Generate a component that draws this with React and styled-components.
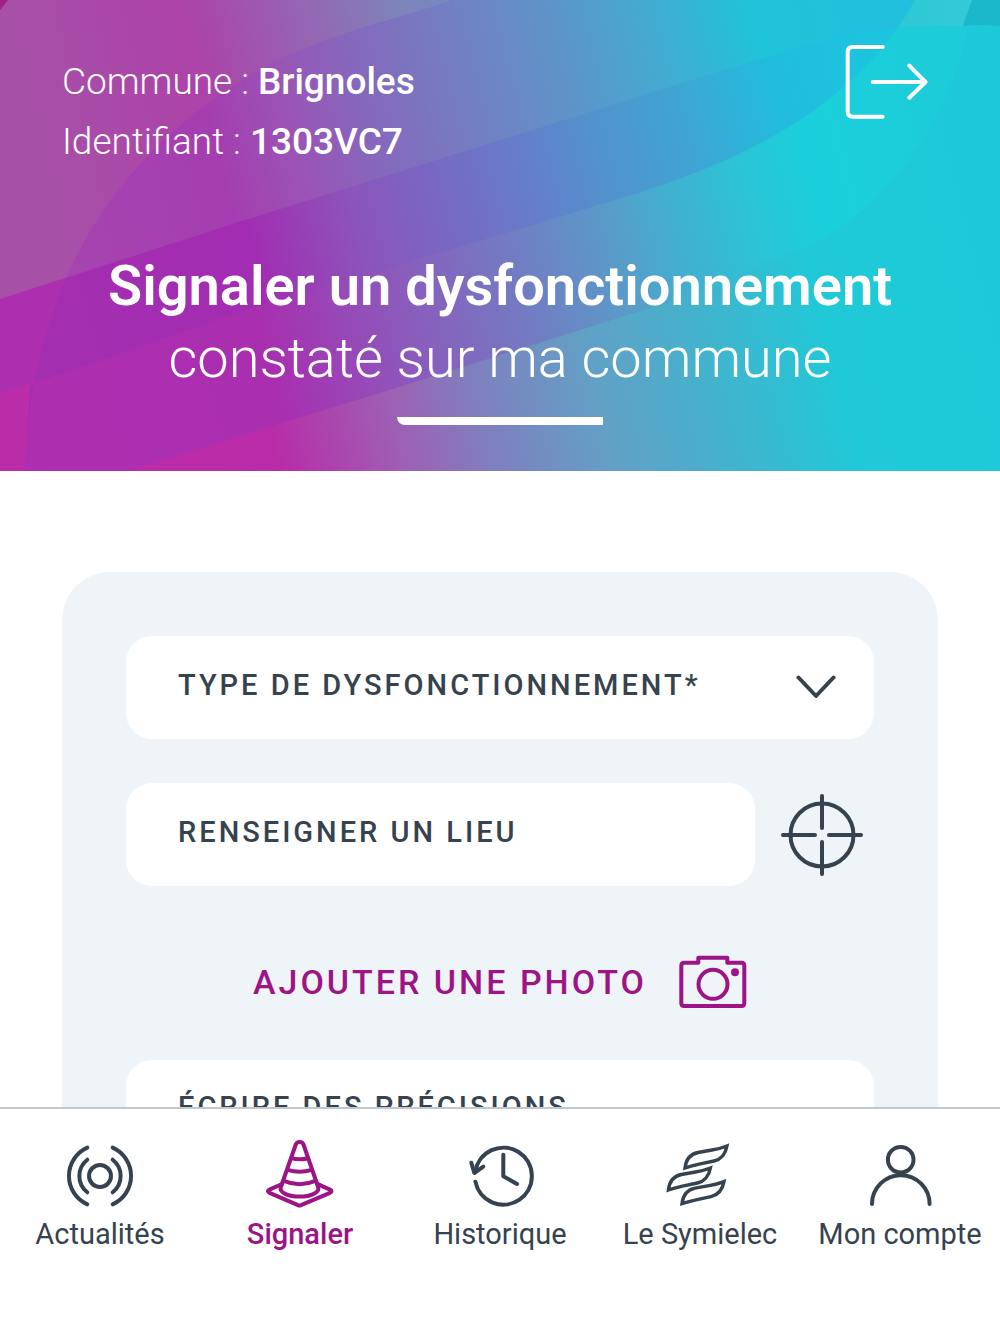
import styled, { createGlobalStyle } from 'styled-components';

const COLORS = {
  ink: '#36424e',
  accent: '#9c1485',
  panel: '#eef4f8',
  line: '#c3c8cc',
}

const GlobalStyle = createGlobalStyle`
  * {
    box-sizing: border-box;
  }

  body {
    margin: 0;
    background: white;
    color: ${COLORS.ink};
    font-family: Roboto, 'Liberation Sans', sans-serif;
  }

  button, input, select, textarea {
    font-family: inherit;
  }
`

const Screen = styled.div`
  display: flex;
  flex-direction: column;
  height: 100vh;
`

/** Everything above the tab bar scrolls */
const Content = styled.div`
  flex: 1;
  min-height: 0;
  overflow-y: auto;
  scrollbar-width: none;
`

const Hero = styled.header`
  position: relative;
  isolation: isolate;
  padding: 52px 62px 46px;
  color: white;
`

const Waves = styled.svg`
  position: absolute;
  inset: 0;
  z-index: -1;
  width: 100%;
  height: 100%;
`

const HeroTop = styled.div`
  display: flex;
  justify-content: space-between;
  align-items: flex-start;
`

const Identity = styled.p`
  margin: 0;
  font-size: 37px;
  font-weight: 300;
  line-height: 60px;

  strong {
    font-weight: 500;
  }
`

const IconButton = styled.button`
  display: flex;
  flex-shrink: 0;
  padding: 0;
  border: none;
  background: none;
  color: inherit;
  cursor: pointer;
`

const LogoutButton = styled(IconButton)`
  margin: -8px 10px 0 0;
`

const Title = styled.h1`
  margin: 78px 0 0;
  font-size: 56px;
  font-weight: 300;
  line-height: 72px;
  text-align: center;

  strong {
    display: block;
    font-weight: 600;
  }
`

const TitleRule = styled.div`
  width: 206px;
  height: 8px;
  margin: 23px auto 0;
  border-bottom-left-radius: 8px;
  background: white;
`

const Main = styled.main`
  padding: 101px 62px 62px;
`

const Form = styled.form`
  display: flex;
  flex-direction: column;
  gap: 44px;
  padding: 64px;
  border-radius: 48px;
  background: ${COLORS.panel};
`

const fieldStyles = `
  display: block;
  width: 100%;
  border: none;
  border-radius: 26px;
  background: white;
  color: ${COLORS.ink};
  font-size: 29px;
  font-weight: 500;
  letter-spacing: 3px;
  text-transform: uppercase;

  &::placeholder {
    color: inherit;
    opacity: 1;
  }
`

const SelectWrap = styled.div`
  position: relative;
`

const Select = styled.select`
  ${fieldStyles}
  appearance: none;
  height: 103px;
  padding: 0 90px 6px 52px;
`

const Chevron = styled.svg`
  position: absolute;
  top: 39px;
  right: 38px;
  pointer-events: none;
`

const PlaceRow = styled.div`
  display: flex;
  align-items: center;
  gap: 26px;
  padding-right: 11px;
`

const Input = styled.input`
  ${fieldStyles}
  flex: 1;
  min-width: 0;
  height: 103px;
  padding: 0 52px 6px;
`

const Textarea = styled.textarea`
  ${fieldStyles}
  height: 240px;
  padding: 29px 52px;
  line-height: 36px;
  resize: none;
`

const PhotoButton = styled(IconButton)`
  align-items: center;
  justify-content: center;
  gap: 32px;
  height: 68px;
  margin-top: 18px;
  color: ${COLORS.accent};
  font-size: 34px;
  font-weight: 500;
  letter-spacing: 3px;
  text-transform: uppercase;
`

const TabBar = styled.nav`
  display: grid;
  grid-template-columns: repeat(5, 1fr);
  padding: 31px 0 82px;
  border-top: 2px solid ${COLORS.line};
  background: white;
`

const Tab = styled.a`
  display: flex;
  flex-direction: column;
  align-items: center;
  gap: 4px;
  color: ${props => props.$active ? COLORS.accent : COLORS.ink};
  font-size: 29px;
  font-weight: ${props => props.$active ? 500 : 400};
  line-height: 36px;
  text-decoration: none;
  white-space: nowrap;
`

/** Shared stroke settings for all the line icons */
function LineIcon({ width = 72, height = 72, stroke = 4, join = 'round', children }) {
  return (
    <svg
      width={width}
      height={height}
      viewBox={`0 0 ${width} ${height}`}
      fill="none"
      stroke="currentColor"
      strokeWidth={stroke}
      strokeLinecap="round"
      strokeLinejoin={join}
      aria-hidden="true"
    >
      {children}
    </svg>
  )
}

const NewsIcon = () => (
  <LineIcon>
    <circle cx="36" cy="36" r="11" />
    <path d="M23.3 19.7a20.7 20.7 0 0 0 0 32.6M48.7 19.7a20.7 20.7 0 0 1 0 32.6" />
    <path d="M23.3 7.7a31 31 0 0 0 0 56.6M48.7 7.7a31 31 0 0 1 0 56.6" />
  </LineIcon>
)

const ConeIcon = () => (
  <LineIcon>
    <path d="M31.8 4.500C33 1.200 38.400 1.200 39.500 4.500L54.300 47.500C55.500 53 46 56.500 35.500 56.500S15.500 53 16.700 47.500Z" />
    <path d="M27.500 18.200Q35.500 20.500 43.700 18.200M23.500 29.800Q35.500 33.500 47.700 29.800M19.700 40.800Q35.500 47.500 51.500 40.800" />
    <path d="M17.500 44.200L5.500 49.600Q2.500 51.300 5.500 52.800L34 65.200Q35.500 65.900 37 65.200L66 52.800Q69 51.300 66 49.600L53.800 44.200" />
  </LineIcon>
)

const HistoryIcon = () => (
  <LineIcon>
    <path d="M11.400 41.700A28.500 28.500 0 1 0 11.200 31.700" />
    <path d="M7.300 22.700L10.300 33L19.300 26.700" />
    <path d="M39.300 14.700V36.200L53 44" />
  </LineIcon>
)

const LEAF = 'M21 28C22 18.500 27 14 34 12.500L48 10C54 9 58 8 63 6C61.500 14 57.500 19.300 50 21L35 24.200C30 25.300 25.500 26.400 21 28Z'

const SymielecIcon = () => (
  <LineIcon stroke={3.400} join="miter">
    <path d={LEAF} />
    <path d={LEAF} transform="translate(-16.600 22)" />
    <path d={LEAF} transform="translate(-3 35.600)" />
  </LineIcon>
)

const AccountIcon = () => (
  <LineIcon>
    <circle cx="36.700" cy="19.700" r="12.800" />
    <path d="M8 64a28.800 28.800 0 0 1 57.600 0" />
  </LineIcon>
)

const TABS = [
  { label: 'Actualités', href: '#actualites', Icon: NewsIcon },
  { label: 'Signaler', href: '#signaler', Icon: ConeIcon, active: true },
  { label: 'Historique', href: '#historique', Icon: HistoryIcon },
  { label: 'Le Symielec', href: '#symielec', Icon: SymielecIcon },
  { label: 'Mon compte', href: '#compte', Icon: AccountIcon },
]

// each surface of the hero has its own run of colours, all along the same slanted axis
const GRADIENTS = {
  base: [[0, '#bb2ca8'], [0.16, '#b92ba8'], [0.29, '#9e60b4'], [0.38, '#7f80be'], [0.5, '#62a0c6'], [0.6, '#48b0cc'], [0.75, '#1fc9d8'], [1, '#1cc9d8']],
  veil: [[0, '#a650a8'], [0.18, '#ad42a8'], [0.3, '#9565b3'], [0.4, '#7e84bc'], [0.5, '#6a8cc4'], [0.75, '#20c4d8'], [0.95, '#34c9d6']],
  veilInner: [[0, '#a644b0'], [0.18, '#a43eb0'], [0.26, '#9a54b6'], [0.34, '#8568bc'], [0.44, '#747ec2'], [0.54, '#6092c8'], [0.64, '#45a9d0'], [0.75, '#20c4da'], [0.9, '#22c0dc']],
  band: [[0, '#ae2eb0'], [0.18, '#a82fb0'], [0.33, '#8a5cbc'], [0.44, '#7579c2'], [0.55, '#5a9ac9'], [0.62, '#42b0d0'], [0.7, '#2bc4d7'], [0.77, '#1acfdb'], [0.9, '#1ccdd9']],
  bandInner: [[0, '#a42eb0'], [0.19, '#a22db2'], [0.3, '#8c54ba'], [0.38, '#7a66c2'], [0.46, '#6a78c8'], [0.49, '#6480cb'], [0.56, '#5292cc'], [0.66, '#3ea6d4'], [0.75, '#22bcdc'], [0.85, '#1cc4e0']],
}

function HeroWaves() {
  return (
    <Waves viewBox="0 0 1000 471" preserveAspectRatio="none" aria-hidden="true">
      <defs>
        {Object.entries(GRADIENTS).map(([id, stops]) => (
          <linearGradient key={id} id={id} gradientUnits="userSpaceOnUse" x1="0" y1="0" x2="941" y2="-235">
            {stops.map(([offset, color]) => <stop key={offset} offset={offset} stopColor={color} />)}
          </linearGradient>
        ))}
        <clipPath id="oval">
          <path d="M25 471C30 330 80 175 255 73C320 35 390 22 453 0H915C870 80 790 145 638 193L510 232L255 307L30 385Z" />
        </clipPath>
      </defs>
      <rect width="1000" height="471" fill="url(#base)" />
      <path d="M0 393V0H972C962 90 900 225 765 262C725 282 690 297 644 310L383 392L140 467L127 471H25C26 430 30 405 35 382Z" fill="url(#band)" />
      <path d="M0 0H972L963 26C880 20 800 47 701 77L510 137L245 220L0 299Z" fill="url(#veil)" />
      <g clipPath="url(#oval)">
        <rect width="1000" height="471" fill="url(#bandInner)" />
        <path d="M0 0H972L963 26C880 20 800 47 701 77L510 137L245 220L0 299Z" fill="url(#veilInner)" />
      </g>
      <path d="M972 0H1000V26Q980 24 963 26Z" fill="#1bb8cb" />
      <path d="M0 0H8L0 10Z" fill="#a0208a" />
    </Waves>
  )
}

export default function App() {
  return (
    <>
      <GlobalStyle />
      <Screen>
        <Content>
          <Hero>
            <HeroWaves />
            <HeroTop>
              <div>
                <Identity>Commune : <strong>Brignoles</strong></Identity>
                <Identity>Identifiant : <strong>1303VC7</strong></Identity>
              </div>
              <LogoutButton type="button" aria-label="Déconnexion">
                <LineIcon width={84} height={76}>
                  <path d="M38.700 3H9Q3.700 3 3.700 8.300V67.400Q3.700 72.700 9 72.700H38.700" />
                  <path d="M28.700 38H81.500M65.300 21.700L81.500 38L65.300 53.700" />
                </LineIcon>
              </LogoutButton>
            </HeroTop>
            <Title>
              <strong>Signaler un dysfonctionnement</strong>
              constaté sur ma commune
            </Title>
            <TitleRule />
          </Hero>

          <Main>
            <Form>
              <SelectWrap>
                <Select aria-label="Type de dysfonctionnement" defaultValue="" required>
                  <option value="">Type de dysfonctionnement*</option>
                </Select>
                <Chevron width="40" height="24" viewBox="0 0 40 24" fill="none" stroke={COLORS.ink} strokeWidth="4" strokeLinecap="round" strokeLinejoin="round" aria-hidden="true">
                  <path d="M2.500 2.500L20 21L37.500 2.500" />
                </Chevron>
              </SelectWrap>
              <PlaceRow>
                <Input type="text" aria-label="Renseigner un lieu" placeholder="Renseigner un lieu" />
                <IconButton type="button" aria-label="Me localiser">
                  <LineIcon width={82} height={82}>
                    <circle cx="41" cy="41" r="31.500" />
                    <path d="M41 2V34M41 48V80M2 41H34M48 41H80" />
                  </LineIcon>
                </IconButton>
              </PlaceRow>
              <PhotoButton type="button">
                Ajouter une photo
                <LineIcon width={68} height={54}>
                  <path d="M19.300 7.700V2.700H48.300V7.700H62.300Q65.300 7.700 65.300 10.700V48Q65.300 51 62.300 51H5.300Q2.300 51 2.300 48V10.700Q2.300 7.700 5.300 7.700Z" />
                  <circle cx="34" cy="29.300" r="14.500" />
                  <circle cx="56" cy="17.300" r="2" />
                </LineIcon>
              </PhotoButton>
              <Textarea aria-label="Écrire des précisions" placeholder="Écrire des précisions" />
            </Form>
          </Main>
        </Content>

        <TabBar>
          {TABS.map(({ label, href, Icon, active }) => (
            <Tab key={label} href={href} $active={active} aria-current={active ? 'page' : undefined}>
              <Icon />
              {label}
            </Tab>
          ))}
        </TabBar>
      </Screen>
    </>
  )
}
